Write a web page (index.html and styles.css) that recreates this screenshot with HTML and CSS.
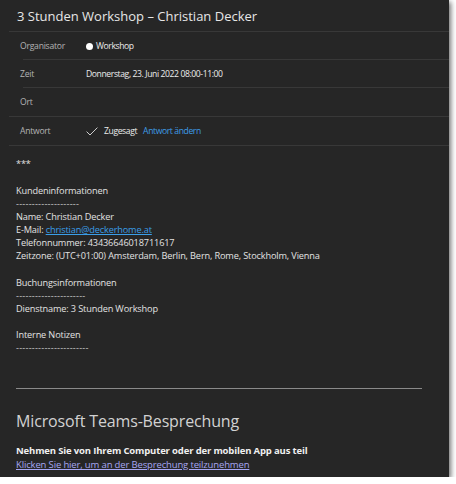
FILE: index.html
```html
<!DOCTYPE html>
<html lang="de">
<head>
    <meta charset="UTF-8">
    <title>3 Stunden Workshop</title>
    <link rel="stylesheet" href="styles.css">
</head>
<body>
<div class="panel">
    <div class="title">3 Stunden Workshop – Christian Decker</div>
    <div class="details">
        <div class="row inset">
            <span class="label">Organisator</span>
            <span class="value"><i class="dot"></i>Workshop</span>
        </div>
        <div class="row inset">
            <span class="label">Zeit</span>
            <span class="value">Donnerstag, 23. Juni 2022 08:00-11:00</span>
        </div>
        <div class="row">
            <span class="label">Ort</span>
            <span class="value"></span>
        </div>
        <div class="row">
            <span class="label">Antwort</span>
            <span class="value">
                <svg class="check" width="12" height="9" viewBox="0 0 12 9"><path d="M0.6 4.6 L4 8 L11.4 0.6" fill="none" stroke="#cfcfcf" stroke-width="1"/></svg>
                Zugesagt <a class="change" href="#">Antwort ändern</a>
            </span>
        </div>
    </div>
    <div class="body">
        <p class="stars">***</p>
        <p class="kunde">Kundeninformationen<br>
        <span class="dash">--------------------</span><br>
        Name: Christian Decker<br>
        E-Mail: <a class="mail" href="#">christian@deckerhome.at</a><br>
        Telefonnummer: 43436646018711617<br>
        Zeitzone: (UTC+01:00) Amsterdam, Berlin, Bern, Rome, Stockholm, Vienna</p>
        <p class="buchung">Buchungsinformationen<br>
        <span class="dash">----------------------</span><br>
        Dienstname: 3 Stunden Workshop</p>
        <p>Interne Notizen<br>
        <span class="dash">-----------------------</span></p>
        <hr>
        <h2>Microsoft Teams-Besprechung</h2>
        <p class="join"><b>Nehmen Sie von Ihrem Computer oder der mobilen App aus teil</b><br>
        <a class="teams" href="#">Klicken Sie hier, um an der Besprechung teilzunehmen</a></p>
    </div>
</div>
</body>
</html>
```

FILE: styles.css
```css
*{
    margin: 0;
    padding: 0;
}
body{
    background: #fff;
    font-family: "Open Sans", "Noto Sans", sans-serif;
}
.panel{
    width: 449px;
    height: 477px;
    background: #262626;
    box-shadow: 2px 2px 5px rgba(0,0,0,.55);
    overflow: hidden;
}
.title{
    margin-left: 9px;
    padding-left: 8px;
    height: 31px;
    line-height: 32px;
    font-size: 13px;
    color: #e6e6e6;
    border-bottom: 1px solid #383838;
}
.details{
    margin-left: 9px;
}
.row{
    display: flex;
    align-items: center;
    height: 28px;
    border-bottom: 1px solid #383838;
    font-size: 8.6px;
    letter-spacing: -0.25px;
}
.row.inset{
    border-bottom: 0;
    height: 28px;
    background: linear-gradient(#383838, #383838) 14px 100% / calc(100% - 14px) 1px no-repeat;
}
.label{
    width: 66px;
    padding-left: 11px;
    color: #b4b4b4;
}
.value{
    display: flex;
    align-items: center;
    color: #ececec;
    letter-spacing: -0.4px;
}
.dot{
    width: 7px;
    height: 7px;
    border-radius: 50%;
    background: #fff;
    margin-right: 3px;
}
.check{
    margin-right: 6px;
}
.change{
    color: #3e9de6;
    text-decoration: none;
    margin-left: 6px;
}
.body{
    padding: 11px 16px 0;
    font-size: 9.2px;
    line-height: 13px;
    color: #e2e2e2;
    letter-spacing: -0.15px;
}
.body p{
    margin-bottom: 11px;
}
.body .stars{
    margin-bottom: 14px;
}
.body .kunde{
    margin-bottom: 14px;
}
.body .buchung{
    margin-bottom: 13px;
}
.dash{
    letter-spacing: 0.2px;
    color: #cfcfcf;
}
.mail{
    color: #3a9ee8;
}
hr{
    width: 406px;
    border: 0;
    border-top: 1px solid #8a8a8a;
    margin: 34px 0 21px;
}
h2{
    font-weight: normal;
    font-size: 16px;
    line-height: 22px;
    color: #d2d2d2;
    margin-bottom: 12px;
}
.body .join{
    font-size: 9.5px;
    line-height: 14px;
}
.join b{
    color: #f0f0f0;
}
.teams{
    color: #a6a6f2;
}
```
